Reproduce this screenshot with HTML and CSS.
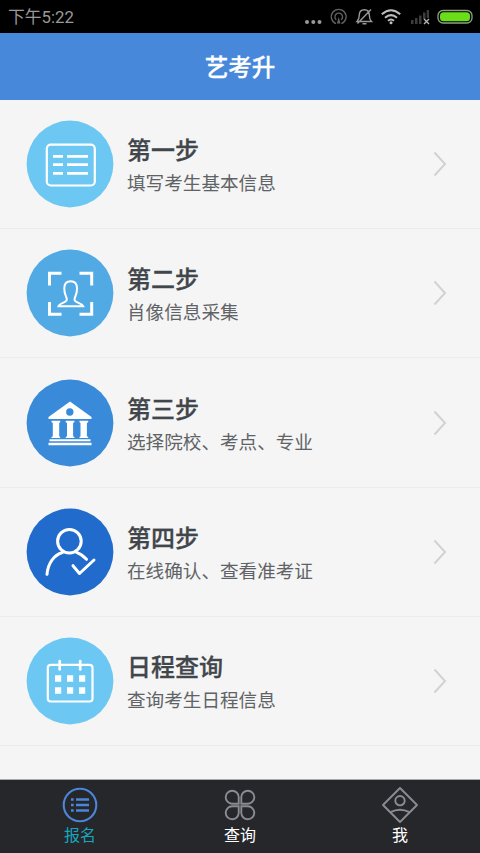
FILE: index.html
```
<!DOCTYPE html>
<html lang="zh-CN">
<head>
<meta charset="utf-8">
<title>艺考升</title>
<link rel="stylesheet" href="styles.css">
</head>
<body>
<div class="status">
  <span class="time">下午5:22</span>
  <svg class="indicators" width="180" height="33" viewBox="300 0 180 33" fill="none">
    <g fill="#999"><circle cx="307" cy="22" r="2"/><circle cx="313.300" cy="22" r="2"/><circle cx="319.500" cy="22" r="2"/></g>
    <g stroke="#626262" stroke-width="1.300"><path d="M336 23.600A7.400 7.400 0 1 1 341.400 23.600"/><path d="M336.300 19.800A3.800 3.800 0 1 1 341.200 19.800"/></g>
    <path d="M338.700 17l-1.800 6.500h3.600z" fill="#626262"/>
    <g stroke="#989898" stroke-width="1.400"><path d="M357 21.500h14.500c-2-2-2.200-3-2.200-6.500 0-3.500-2-5.300-5-5.300s-5 2-5 5.300c0 3.500-.3 4.500-2.300 6.500zM357.500 23.500L371 9.500M362.500 23.800h4"/></g>
    <g stroke="#bdbdbd" stroke-width="2"><path d="M381.800 14.200q9.200-8 18.400 0M385 17.700q6-5.200 12 0M388 20.700q3-2.500 6 0"/></g>
    <circle cx="391" cy="22.700" r="1.500" fill="#bdbdbd"/>
    <path d="M411 20h2.500v4H411zM415 18h2.500v6H415zM419 15.500h2.500V24H419zM423 12.500h2.500V19H423zM426.700 10h2.300v8h-2.300z" fill="#3c3c3c"/>
    <path d="M424 19l5 5M429 19l-5 5" stroke="#b5b5b5" stroke-width="1.400"/>
    <rect x="438" y="10.500" width="34" height="12.500" rx="5" stroke="#8ea381" stroke-width="1.300"/>
    <rect x="440" y="12.300" width="30" height="9" rx="3.500" fill="#6ade19"/>
  </svg>
</div>
<header class="header">艺考升</header>
<main class="list">
  <a class="row">
    <svg class="icon" viewBox="-44 -44 88 88"><circle class="sky" r="43.400"/><g class="line"><rect x="-23.200" y="-19.300" width="48" height="40.800" rx="4" stroke-width="2.200"/><path stroke-width="2.700" d="M-17-7.700h10M-3-7.700h21M-17 .7h10M-3 .7h21M-17 9.300h10M-3 9.300h21"/></g></svg>
    <span class="text"><b class="title">第一步</b><span class="sub">填写考生基本信息</span></span>
    <svg class="arrow" viewBox="0 0 14 26"><path d="M1.500 1.500L12 13 1.500 24.500"/></svg>
  </a>
  <a class="row">
    <svg class="icon" viewBox="-44 -44 88 88"><circle class="azure" r="43.400"/><g class="line"><path stroke-width="3" d="M-20.500-7.500V-19.700H-8.500M9.500-19.700H21.700V-7.500M21.700 9V21.200H9.500M-8.500 21.200H-20.500V9"/><path stroke-width="2" d="M-11.500 13.200H13.200C11.500 9.500 4.500 10 4.500 6.500C4.500 3.500 7.200 2 7-4.500C7-9.500 4.500-11.700 .7-11.700C-3-11.700-5.700-9.500-5.700-4.500C-5.800 2-3.200 3.500-3.200 6.500C-3.200 10-10.500 9.500-11.500 13.200Z"/></g></svg>
    <span class="text"><b class="title">第二步</b><span class="sub">肖像信息采集</span></span>
    <svg class="arrow" viewBox="0 0 14 26"><path d="M1.500 1.500L12 13 1.500 24.500"/></svg>
  </a>
  <a class="row">
    <svg class="icon" viewBox="-44 -44 88 88"><circle class="blue" r="43.400"/><g fill="#fff"><path d="M0-21.500L21.500-6V-4H-21.500V-6Z"/><path d="M-18.500-2.300h8.700v1.500l-1 .8v13.300l1 .7v1h-8.700v-1l1.300-.7V0l-1.300-.8zM-4.300-2.300h8.700v1.500l-1.300.8v13.300l1.300.7v1h-8.700v-1l1.300-.7V0l-1.300-.8zM9.500-2.300h8.700v1.500l-1.300.8v13.300l1.300.7v1H9.500v-1l1-.7V0l-1-.8zM-20.500 16.300h41v2h-41zM-21.500 19.700h43v2.500h-43z"/></g><circle class="blue" cx="-.2" cy="-11" r="3.700"/></svg>
    <span class="text"><b class="title">第三步</b><span class="sub">选择院校、考点、专业</span></span>
    <svg class="arrow" viewBox="0 0 14 26"><path d="M1.500 1.500L12 13 1.500 24.500"/></svg>
  </a>
  <a class="row">
    <svg class="icon" viewBox="-44 -44 88 88"><circle class="deep" r="43.400"/><g class="line round" stroke-width="3"><circle cx="-.6" cy="-10.800" r="11.800"/><path d="M-23 22.300C-22 11-16 3-7.500 .5M6.500 .3C10.500 1.700 13.500 4 16.500 7.300M3 13.700L9.500 21.500 24 8"/></g></svg>
    <span class="text"><b class="title">第四步</b><span class="sub">在线确认、查看准考证</span></span>
    <svg class="arrow" viewBox="0 0 14 26"><path d="M1.500 1.500L12 13 1.500 24.500"/></svg>
  </a>
  <a class="row">
    <svg class="icon" viewBox="-44 -44 88 88"><circle class="sky" r="43.400"/><g class="line"><rect x="-22.200" y="-16.200" width="44.700" height="36.700" rx="3" stroke-width="2.200"/><path class="round" stroke-width="2.700" d="M-10.300-20V-11.500M10.200-20V-11.500"/></g><path fill="#fff" d="M-15-5.700h6.200v6.500H-15zM-3-5.700h6.200v6.500H-3zM9-5.700h6.200v6.500H9zM-15 6.200h6.200v6.500H-15zM-3 6.200h6.200v6.500H-3zM9 6.200h6.200v6.500H9z"/></svg>
    <span class="text"><b class="title">日程查询</b><span class="sub">查询考生日程信息</span></span>
    <svg class="arrow" viewBox="0 0 14 26"><path d="M1.500 1.500L12 13 1.500 24.500"/></svg>
  </a>
</main>
<nav class="tabs">
  <a class="tab active">
    <svg viewBox="-20 -20 40 40"><g fill="none" stroke="#4b86d8"><circle r="16.300" stroke-width="2.100"/><path stroke-width="2.500" d="M-9-5.500h2.700M-4-5.500H9M-9 0h2.700M-4 0H9M-9 5.500h2.700M-4 5.500H9"/></g></svg>
    <span>报名</span>
  </a>
  <a class="tab">
    <svg viewBox="-20 -20 40 40"><g fill="none" stroke="#8b8c93" stroke-width="1.900"><path d="M-1.300-1.300V-8A6.500 6.500 0 1 0-8-1.300Z"/><path d="M1.300-1.300V-8A6.500 6.500 0 1 1 8-1.300Z"/><path d="M-1.300 1.300V8A6.500 6.500 0 1 1-8 1.300Z"/><path d="M1.300 1.300V8A6.500 6.500 0 1 0 8 1.300Z"/></g></svg>
    <span>查询</span>
  </a>
  <a class="tab">
    <svg viewBox="-20 -20 40 40"><g fill="none" stroke="#8b8c93" stroke-width="1.900" stroke-linejoin="round"><path d="M0-17L17 0 0 17-17 0Z"/><circle cy="-4.300" r="4.700"/><path d="M-9.500 7.200Q0 2.200 9.500 7.200"/></g></svg>
    <span>我</span>
  </a>
</nav>
</body>
</html>
```
FILE: styles.css
```
* { box-sizing: border-box; }
body {
  margin: 0;
  height: 853px;
  display: flex;
  flex-direction: column;
  overflow: hidden;
  background: #f5f5f5;
  font-family: "Noto Sans CJK SC", sans-serif;
}
.status {
  height: 33px;
  flex: none;
  display: flex;
  justify-content: space-between;
  align-items: center;
  padding-left: 8px;
  background: #000;
  color: #999;
}
.time { font: 16.800px/32px Roboto, "Noto Sans CJK SC", sans-serif; }
.header {
  height: 67px;
  flex: none;
  background: #4788da;
  color: #fff;
  font-size: 23.500px;
  font-weight: 500;
  -webkit-text-stroke: 0.3px;
  line-height: 67px;
  text-align: center;
}
.list { flex: 1; }
.row {
  display: flex;
  align-items: center;
  height: 129.220px;
  padding: 0 33px 0 26px;
  border-bottom: 1.500px solid #ececec;
}
.icon { width: 88px; height: 88px; flex: none; }
.sky { fill: #6cc8f2; }
.azure { fill: #51aae3; }
.blue { fill: #398ad8; }
.deep { fill: #206bcb; }
.line { fill: none; stroke: #fff; }
.round { stroke-linecap: round; stroke-linejoin: round; }
.text { flex: 1; display: flex; flex-direction: column; padding: 2px 0 0 13px; }
.title { color: #41464b; font-size: 24px; font-weight: 500; -webkit-text-stroke: 0.3px; line-height: 34px; }
.sub { color: #606366; font-size: 18.600px; line-height: 32px; }
.arrow { width: 14px; height: 26px; fill: none; stroke: #d2d2d2; stroke-width: 2; }
.tabs {
  height: 74px;
  flex: none;
  display: flex;
  border-top: 1px solid #a9aaae;
  background: #26272b;
}
.tab {
  flex: 1;
  display: flex;
  flex-direction: column;
  align-items: center;
  padding-top: 5px;
  color: #fff;
  font-size: 16px;
  line-height: 18px;
}
.tab svg { width: 40px; height: 40px; }
.active { color: #17a5bf; }
```
